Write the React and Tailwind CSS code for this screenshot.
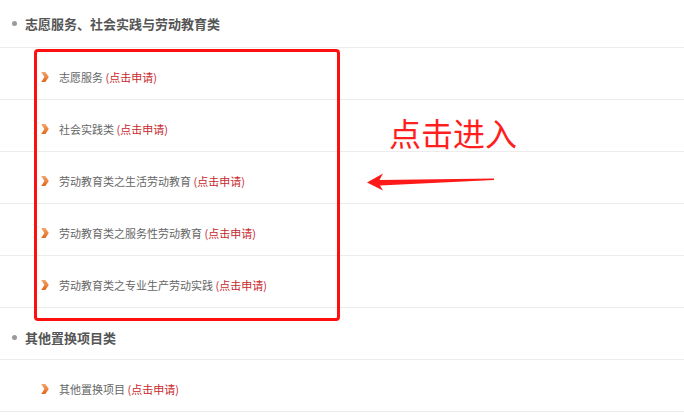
import React from "react";

const groups = [
  {
    title: "志愿服务、社会实践与劳动教育类",
    items: [
      "志愿服务",
      "社会实践类",
      "劳动教育类之生活劳动教育",
      "劳动教育类之服务性劳动教育",
      "劳动教育类之专业生产劳动实践",
    ],
  },
  {
    title: "其他置换项目类",
    items: ["其他置换项目"],
  },
];

const Chevron = () => (
  <svg width="8" height="12" viewBox="0 0 8 12" className="shrink-0">
    <defs>
      <linearGradient id="chev" x1="0" y1="0" x2="0" y2="1">
        <stop offset="0" stopColor="#f5a466" />
        <stop offset="1" stopColor="#e4661e" />
      </linearGradient>
    </defs>
    <path d="M0.2 1 L4.4 1 L7.8 6 L4.4 11 L0.2 11 L3.4 6 Z" fill="url(#chev)" />
  </svg>
);

const App = () => {
  return (
    <div
      className="relative w-[684px] h-[415px] overflow-hidden bg-white"
      style={{ fontFamily: '"Noto Sans CJK SC", "Noto Sans", sans-serif' }}
    >
      {groups.map((g, gi) => (
        <div key={gi}>
          <div
            className={`flex items-center gap-[8px] pl-[12px] border-b border-[#ececec] ${
              gi === 0 ? "h-[48px]" : "h-[52px] pt-[8px]"
            }`}
          >
            <span className="w-[5px] h-[5px] rounded-full bg-[#9a9a9a]" />
            <span className="text-[13px] font-bold text-[#555]">{g.title}</span>
          </div>
          {g.items.map((item) => (
            <div
              key={item}
              className="flex items-center gap-[10px] pl-[41px] pt-[7px] h-[52px] border-b border-[#ececec]"
            >
              <Chevron />
              <span className="text-[11px] text-[#666]">
                {item}{" "}
                <span className="text-[#c8282c]">(点击申请)</span>
              </span>
            </div>
          ))}
        </div>
      ))}

      {/* annotation overlay */}
      <div className="absolute left-[34px] top-[49px] w-[306px] h-[272px] border-[3px] border-[#ff1010] rounded-[4px]" />
      <div className="absolute left-[389px] top-[110px] text-[32px] leading-[44px] text-[#ff1f1f]">
        点击进入
      </div>
      <svg
        className="absolute left-[366px] top-[171px]"
        width="130"
        height="22"
        viewBox="0 0 130 22"
      >
        <path
          d="M1 11.5 L17 2.5 L13.5 9 L128 7.5 L128 9 L14 14.5 L17 19.5 Z"
          fill="#ff1a1a"
        />
      </svg>
    </div>
  );
};

export default App;
